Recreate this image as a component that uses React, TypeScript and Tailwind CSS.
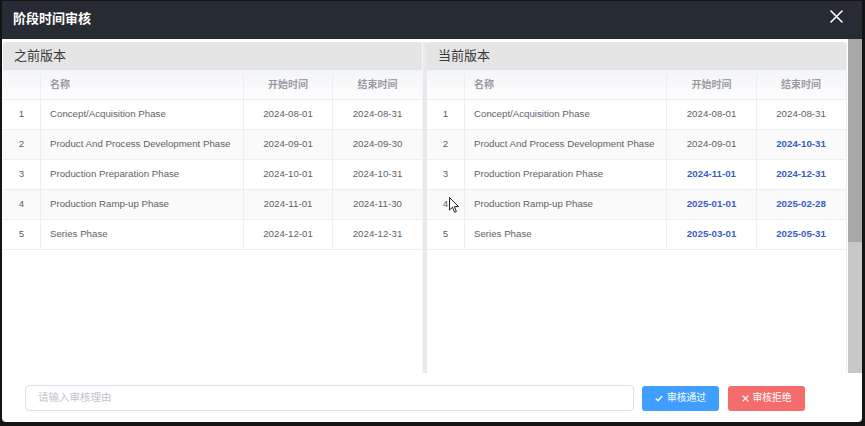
import React from "react";

type Row = { i: number; name: string; s: string; e: string; sb?: boolean; eb?: boolean };

const leftRows: Row[] = [
  { i: 1, name: "Concept/Acquisition Phase", s: "2024-08-01", e: "2024-08-31" },
  { i: 2, name: "Product And Process Development Phase", s: "2024-09-01", e: "2024-09-30" },
  { i: 3, name: "Production Preparation Phase", s: "2024-10-01", e: "2024-10-31" },
  { i: 4, name: "Production Ramp-up Phase", s: "2024-11-01", e: "2024-11-30" },
  { i: 5, name: "Series Phase", s: "2024-12-01", e: "2024-12-31" },
];

const rightRows: Row[] = [
  { i: 1, name: "Concept/Acquisition Phase", s: "2024-08-01", e: "2024-08-31" },
  { i: 2, name: "Product And Process Development Phase", s: "2024-09-01", e: "2024-10-31", eb: true },
  { i: 3, name: "Production Preparation Phase", s: "2024-11-01", e: "2024-12-31", sb: true, eb: true },
  { i: 4, name: "Production Ramp-up Phase", s: "2025-01-01", e: "2025-02-28", sb: true, eb: true },
  { i: 5, name: "Series Phase", s: "2025-03-01", e: "2025-05-31", sb: true, eb: true },
];

function DateCell({ v, bold, last }: { v: string; bold?: boolean; last?: boolean }) {
  return (
    <div
      className={
        "flex items-center justify-center " +
        (last ? "" : "border-r border-[#ebeef5] ") +
        (bold ? "font-bold text-[#3a5cc5]" : "text-[#606266]")
      }
    >
      {v}
    </div>
  );
}

function Panel({ title, rows, cols }: { title: string; rows: Row[]; cols: string }) {
  return (
    <div className="w-[419px] flex flex-col">
      <div className="h-[28px] bg-[#e5e5e5] rounded-t-[3px] border-b border-[#dde3ea] flex items-center pl-[11px] text-[13px] text-[#3a3a3a]">
        {title}
      </div>
      <div
        className={
          "grid h-[30px] border-b border-[#ebeef5] bg-linear-to-b from-[#f4f5f8] to-[#fdfdfe] text-[10px] font-semibold text-[#9a9ca1] " +
          cols
        }
      >
        <div className="border-r border-[#ebeef5]" />
        <div className="border-r border-[#ebeef5] flex items-center pl-[9px]">名称</div>
        <div className="border-r border-[#ebeef5] flex items-center justify-center">开始时间</div>
        <div className="flex items-center justify-center">结束时间</div>
      </div>
      {rows.map((r, idx) => (
        <div
          key={r.i}
          className={
            "grid h-[30px] border-b border-[#ebeef5] text-[9.7px] text-[#606266] " +
            cols +
            (idx % 2 === 1 ? " bg-[#fafafa]" : " bg-white")
          }
        >
          <div className="border-r border-[#ebeef5] flex items-center justify-center">{r.i}</div>
          <div className="border-r border-[#ebeef5] flex items-center pl-[9px] whitespace-nowrap">{r.name}</div>
          <DateCell v={r.s} bold={r.sb} />
          <DateCell v={r.e} bold={r.eb} last />
        </div>
      ))}
    </div>
  );
}

export default function App() {
  return (
    <div className="w-[865px] h-[426px] bg-[#141414] pt-px pl-[2px] pr-[3px] pb-[4px] font-['Liberation_Sans','Noto_Sans_CJK_SC',sans-serif] relative overflow-hidden">
      <div className="flex flex-col h-full">
        <div className="h-[38px] bg-[#272b33] flex items-center justify-between pl-[11px] pr-[19px]">
          <div className="text-white text-[13px] font-bold pb-[4px] font-['Noto_Sans_CJK_SC',sans-serif]">阶段时间审核</div>
          <svg width="13" height="13" viewBox="0 0 13 13" className="mb-[8px]">
            <path d="M1 1 L12 12 M12 1 L1 12" stroke="#ffffff" strokeWidth="1.6" strokeLinecap="round" />
          </svg>
        </div>
        <div className="flex-1 bg-white rounded-b-[4px] flex flex-col">
          <div className="h-[334px] flex">
            <div className="flex pl-px pt-[3px]">
              <Panel title="之前版本" rows={leftRows} cols="grid-cols-[38px_203px_89px_89px]" />
              <div className="w-[5px] bg-[#e9e9ed] border-l border-[#f4f4f6]" />
              <div className="border-r border-[#ebeef5] flex">
                <Panel title="当前版本" rows={rightRows} cols="grid-cols-[38px_202px_90px_88px]" />
              </div>
            </div>
            <div className="w-[1px]" />
            <div className="w-[14px] flex flex-col bg-[#c8c8c8]">
              <div className="h-[203px] bg-[#a8a8a8]" />
            </div>
          </div>
          <div className="flex items-center pl-[23px] pt-[12px]">
            <div className="w-[609px] h-[26px] border border-[#dcdfe6] rounded-[4px] flex items-center pl-[12px] text-[10.5px] text-[#c0c4cc]">
              请输入审核理由
            </div>
            <div className="ml-[8px] w-[77px] h-[25px] rounded-[3px] bg-[#409eff] flex items-center justify-center gap-[4px] text-white text-[9.75px]">
              <svg width="8" height="7" viewBox="0 0 8 7">
                <path d="M0.8 3.6 L3 5.8 L7.2 1" stroke="#ffffff" strokeWidth="1.4" fill="none" />
              </svg>
              审核通过
            </div>
            <div className="ml-[9px] w-[77px] h-[25px] rounded-[3px] bg-[#f56c6c] flex items-center justify-center gap-[4px] text-white text-[9.75px]">
              <svg width="7" height="7" viewBox="0 0 7 7">
                <path d="M0.6 0.6 L6.4 6.4 M6.4 0.6 L0.6 6.4" stroke="#ffffff" strokeWidth="1.3" />
              </svg>
              审核拒绝
            </div>
          </div>
        </div>
      </div>
      <svg width="11" height="17" viewBox="0 0 11 17" className="absolute left-[449px] top-[197px]">
        <path d="M0.5 0.5 L0.5 13 L3.5 10.2 L5.6 15.3 L7.4 14.5 L5.4 9.6 L9.6 9.6 Z" fill="#ffffff" stroke="#222" strokeWidth="1" strokeLinejoin="round" />
      </svg>
    </div>
  );
}
